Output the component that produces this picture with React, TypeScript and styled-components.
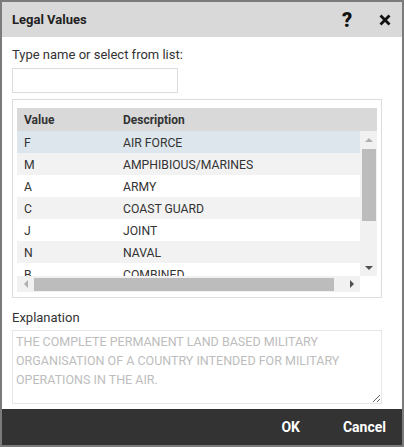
import React from 'react';
import styled, { createGlobalStyle } from 'styled-components';

const GlobalStyle = createGlobalStyle`
  html, body {
    margin: 0;
    padding: 0;
    background: #fff;
  }
  * {
    box-sizing: border-box;
  }
`;

const Dialog = styled.div`
  width: 404px;
  height: 447px;
  border: 2px solid #7b7b7b;
  background: #fff;
  display: flex;
  flex-direction: column;
  font-family: Roboto, "Liberation Sans", sans-serif;
  color: #333;
  overflow: hidden;
`;

const Header = styled.div`
  height: 35px;
  flex: none;
  background: #d9d9d9;
  display: flex;
  align-items: center;
  padding: 0 6px 0 10px;
`;

const Title = styled.div`
  flex: 1;
  font-size: 13px;
  font-weight: 700;
  color: #222;
`;

const HeaderButton = styled.button<{ $gap?: number }>`
  border: none;
  background: transparent;
  padding: 0;
  width: 22px;
  height: 22px;
  display: flex;
  align-items: center;
  justify-content: center;
  font-family: Roboto, "Liberation Sans", sans-serif;
  font-size: 20px;
  font-weight: 900;
  color: #111;
  margin-left: ${(p) => p.$gap ?? 0}px;
`;

const Content = styled.div`
  flex: 1;
  display: flex;
  flex-direction: column;
  padding: 10px 20px 0 10px;
`;

const Label = styled.div<{ $top?: number }>`
  font-size: 13px;
  line-height: 16px;
  color: #333;
  margin-top: ${(p) => p.$top ?? 0}px;
`;

const TextInput = styled.input`
  margin-top: 5px;
  width: 166px;
  height: 25px;
  border: 1px solid #dcdcdc;
  outline: none;
  padding: 0 4px;
  font-family: inherit;
  font-size: 13px;
`;

const ListPanel = styled.div`
  margin-top: 6px;
  height: 199px;
  border: 1px solid #dcdcdc;
  padding: 8px 4px 5px 4px;
  display: flex;
  flex-direction: column;
`;

const TableHead = styled.div`
  height: 23px;
  flex: none;
  background: #d9d9d9;
  display: flex;
  align-items: center;
  font-size: 12px;
  font-weight: 700;
  color: #333;
`;

const Cell = styled.div<{ $w?: number }>`
  width: ${(p) => (p.$w ? `${p.$w}px` : 'auto')};
  flex: ${(p) => (p.$w ? 'none' : 1)};
  padding-left: 7px;
  white-space: nowrap;
`;

const BodyArea = styled.div`
  display: flex;
  height: 145px;
  flex: none;
`;

const Rows = styled.div`
  flex: 1;
  overflow: hidden;
`;

const Row = styled.div<{ $bg: string }>`
  height: 22px;
  display: flex;
  align-items: center;
  padding-top: 1px;
  background: ${(p) => p.$bg};
  font-size: 12.2px;
  color: #333;
`;

const VTrack = styled.div`
  width: 17px;
  flex: none;
  background: #f1f1f1;
  display: flex;
  flex-direction: column;
  align-items: center;
`;

const ArrowBox = styled.div<{ $size: number }>`
  width: ${(p) => p.$size}px;
  height: ${(p) => p.$size}px;
  flex: none;
  display: flex;
  align-items: center;
  justify-content: center;
`;

const VThumb = styled.div`
  width: 14px;
  height: 72px;
  margin-top: 1px;
  background: #bcbcbc;
`;

const Spacer = styled.div`
  flex: 1;
`;

const HBar = styled.div`
  height: 16px;
  flex: none;
  display: flex;
`;

const HTrack = styled.div`
  flex: 1;
  background: #f1f1f1;
  display: flex;
  align-items: center;
`;

const HThumb = styled.div`
  width: 300px;
  height: 13px;
  background: #bcbcbc;
`;

const Corner = styled.div`
  width: 17px;
  background: #fff;
`;

const Explanation = styled.textarea`
  margin-top: 4px;
  width: 370px;
  height: 74px;
  border: 1px solid #e6e6e6;
  outline: none;
  padding: 1px 3px;
  font-family: Roboto, "Liberation Sans", sans-serif;
  font-size: 12.5px;
  line-height: 19px;
  color: #bdbdbd;
  resize: both;
`;

const Footer = styled.div`
  height: 36px;
  flex: none;
  margin-top: 5px;
  background: #333;
  display: flex;
  align-items: center;
  justify-content: flex-end;
  gap: 43px;
  padding-right: 16px;
`;

const FooterButton = styled.button`
  border: none;
  background: transparent;
  padding: 0;
  font-family: Roboto, "Liberation Sans", sans-serif;
  font-size: 14px;
  font-weight: 700;
  color: #fff;
`;

const Tri = ({ dir, color }: { dir: 'up' | 'down' | 'left' | 'right'; color: string }) => {
  const pts = {
    up: '0,5 4,1 8,5',
    down: '0,1 8,1 4,5',
    left: '5,0 5,8 1,4',
    right: '1,0 1,8 5,4',
  }[dir];
  const vertical = dir === 'up' || dir === 'down';
  return (
    <svg width={vertical ? 8 : 6} height={vertical ? 6 : 8} viewBox={vertical ? '0 0 8 6' : '0 0 6 8'}>
      <polygon points={pts} fill={color} />
    </svg>
  );
};

const data = [
  ['F', 'AIR FORCE'],
  ['M', 'AMPHIBIOUS/MARINES'],
  ['A', 'ARMY'],
  ['C', 'COAST GUARD'],
  ['J', 'JOINT'],
  ['N', 'NAVAL'],
  ['B', 'COMBINED'],
];

const App = () => {
  return (
    <>
      <GlobalStyle />
      <Dialog>
        <Header>
          <Title>Legal Values</Title>
          <HeaderButton>?</HeaderButton>
          <HeaderButton $gap={16}>
            <svg width="12" height="12" viewBox="0 0 12 12">
              <path d="M1.5 1.5 L10.5 10.5 M10.5 1.5 L1.5 10.5" stroke="#111" strokeWidth="2.8" />
            </svg>
          </HeaderButton>
        </Header>
        <Content>
          <Label>Type name or select from list:</Label>
          <TextInput />
          <ListPanel>
            <TableHead>
              <Cell $w={99}>Value</Cell>
              <Cell>Description</Cell>
            </TableHead>
            <BodyArea>
              <Rows>
                {data.map(([v, d], i) => (
                  <Row key={v} $bg={i === 0 ? '#dce6ec' : i % 2 === 1 ? '#f2f2f2' : '#fff'}>
                    <Cell $w={99}>{v}</Cell>
                    <Cell>{d}</Cell>
                  </Row>
                ))}
              </Rows>
              <VTrack>
                <ArrowBox $size={17}>
                  <Tri dir="up" color="#b0b0b0" />
                </ArrowBox>
                <VThumb />
                <Spacer />
                <ArrowBox $size={17}>
                  <Tri dir="down" color="#505050" />
                </ArrowBox>
              </VTrack>
            </BodyArea>
            <HBar>
              <HTrack>
                <ArrowBox $size={17}>
                  <Tri dir="left" color="#b0b0b0" />
                </ArrowBox>
                <HThumb />
                <Spacer />
                <ArrowBox $size={17}>
                  <Tri dir="right" color="#505050" />
                </ArrowBox>
              </HTrack>
              <Corner />
            </HBar>
          </ListPanel>
          <Label $top={12}>Explanation</Label>
          <Explanation
            readOnly
            value="THE COMPLETE PERMANENT LAND BASED MILITARY ORGANISATION OF A COUNTRY INTENDED FOR MILITARY OPERATIONS IN THE AIR."
          />
        </Content>
        <Footer>
          <FooterButton>OK</FooterButton>
          <FooterButton>Cancel</FooterButton>
        </Footer>
      </Dialog>
    </>
  );
};

export default App;
